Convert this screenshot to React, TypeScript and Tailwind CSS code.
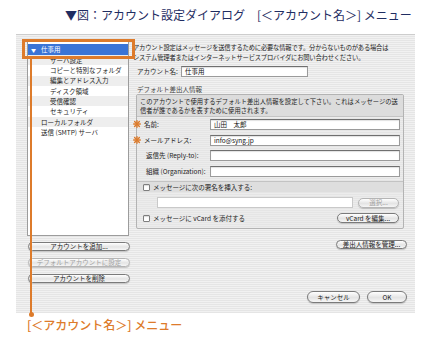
import * as React from 'react';

// Pinstripe aqua window background
const stripes =
  'bg-[repeating-linear-gradient(180deg,#f1f1f1_0px,#f1f1f1_1px,#e5e5e5_1px,#e5e5e5_2px)]';

function AquaButton({
  label,
  className = '',
  disabled = false,
}: {
  label: string;
  className?: string;
  disabled?: boolean;
}) {
  const tone = disabled
    ? 'border-[#b5b5b5] text-[#a0a0a0]'
    : 'border-[#7a7a7a] text-[#1a1a1a]';
  return (
    <div
      className={`flex items-center justify-center rounded-full border bg-[linear-gradient(#ffffff,#e4e4e4_55%,#f6f6f6)] shadow-[0_1px_1px_rgba(0,0,0,0.18)] text-[6.5px] leading-none whitespace-nowrap ${tone} ${className}`}
    >
      {label}
    </div>
  );
}

function Checkbox() {
  return <div className="w-[7px] h-[7px] shrink-0 border border-[#7e7e7e] bg-white rounded-[1px] shadow-[inset_0_1px_1px_rgba(0,0,0,0.15)]" />;
}

function Field({ value = '', className = '' }: { value?: string; className?: string }) {
  return (
    <div
      className={`h-[11px] bg-white border border-[#9b9b9b] border-t-[#6f6f6f] shadow-[inset_0_1px_1px_rgba(0,0,0,0.12)] pl-[3px] text-[6.5px] leading-[9px] text-[#111] ${className}`}
    >
      {value}
    </div>
  );
}

function Star() {
  return (
    <svg width="8" height="8" viewBox="0 0 8 8" className="absolute left-[-4px] top-[1px]">
      <g stroke="#dd7b2b" strokeWidth="1.4" strokeLinecap="round">
        <line x1="4" y1="0.7" x2="4" y2="7.3" />
        <line x1="0.7" y1="4" x2="7.3" y2="4" />
        <line x1="1.6" y1="1.6" x2="6.4" y2="6.4" />
        <line x1="6.4" y1="1.6" x2="1.6" y2="6.4" />
      </g>
    </svg>
  );
}

const treeRows = [
  { label: 'サーバ設定', indent: 'pl-[22px]' },
  { label: 'コピーと特別なフォルダ', indent: 'pl-[22px]' },
  { label: '編集とアドレス入力', indent: 'pl-[22px]' },
  { label: 'ディスク領域', indent: 'pl-[22px]' },
  { label: '受信確認', indent: 'pl-[22px]' },
  { label: 'セキュリティ', indent: 'pl-[22px]' },
  { label: 'ローカルフォルダ', indent: 'pl-[13px]' },
  { label: '送信 (SMTP) サーバ', indent: 'pl-[13px]' },
];

const senderFields = [
  { label: '名前:', value: '山田　太郎', star: true, pad: 'pl-[7px]', mt: 'mt-[2px]' },
  { label: 'メールアドレス:', value: 'info@syng.jp', star: true, pad: 'pl-[7px]', mt: 'mt-[5px]' },
  { label: '返信先 (Reply-to):', value: '', star: false, pad: 'pl-[9px]', mt: 'mt-[4px]' },
  { label: '組織 (Organization):', value: '', star: false, pad: 'pl-[9px]', mt: 'mt-[5px]' },
];

export default function App() {
  return (
    <div className="relative w-[430px] h-[344px] overflow-hidden bg-white font-['Noto_Sans_CJK_JP','Noto_Sans_CJK_SC',sans-serif]">
      {/* heading */}
      <div className="h-[34px] pl-[65px] pt-[8px] text-[12px] leading-[14px] text-[#1f2d62] whitespace-nowrap">
        ▼図：アカウント設定ダイアログ　[＜アカウント名＞] メニュー
      </div>

      {/* dialog */}
      <div className={`ml-[16px] w-[399px] h-[279px] flex border-t border-[#cdcdcd] ${stripes}`}>
        {/* left pane */}
        <div className="w-[115px] shrink-0 pl-[11px] pt-[6px] flex flex-col">
          <div className="w-[102px] h-[195px] bg-white border border-[#9c9c9c] pt-[2px] text-[6.5px] text-[#1c1c1c]">
            <div className="h-[11px] bg-[#3a74d6] text-white flex items-center pl-[3px] gap-[5px] leading-none">
              <span className="text-[5px]">▼</span>
              <span>仕事用</span>
            </div>
            {treeRows.map((row, i) => (
              <div
                key={row.label}
                className={`h-[10.3px] flex items-center leading-none ${row.indent} ${i % 2 === 0 ? 'bg-[#eeeeee]' : 'bg-white'}`}
              >
                {row.label}
              </div>
            ))}
          </div>
          <div className="mt-[6px] flex flex-col gap-[7px] pl-[1px]">
            <AquaButton label="アカウントを追加..." className="w-[102px] h-[9px]" />
            <AquaButton label="デフォルトアカウントに設定" className="w-[102px] h-[9px]" disabled />
            <AquaButton label="アカウントを削除" className="w-[102px] h-[9px]" />
          </div>
        </div>

        {/* right pane */}
        <div className="flex-1 flex flex-col pr-[8px] text-[6.5px] text-[#1c1c1c]">
          <div className="pl-[2px] pt-[8px] leading-[10px] text-[6.3px] tracking-[-0.2px] whitespace-nowrap">
            <div>アカウント設定はメッセージを送信するために必要な情報です。分からないものがある場合は</div>
            <div>システム管理者またはインターネットサービスプロバイダにお問い合わせください。</div>
          </div>

          <div className="mt-[3px] pl-[6px] flex items-center h-[11px]">
            <div className="w-[44px] leading-none">アカウント名:</div>
            <Field value="仕事用" className="w-[127px]" />
          </div>

          <div className="mt-[7px] pl-[6px] h-[10px] leading-[10px] text-[#444]">デフォルト差出人情報</div>

          {/* sender group */}
          <div className="ml-[5px] w-[268px] h-[135px] border border-[#b3b3b3] rounded-[2px] flex flex-col bg-[#e7e7e7]/40">
            <div className="h-[22px] bg-[#dcdcdc] border-b border-[#c4c4c4] px-[3px] pt-[2px] leading-[9px] text-[6.3px] whitespace-nowrap overflow-hidden">
              <div>このアカウントで使用するデフォルト差出人情報を設定して下さい。これはメッセージの送</div>
              <div>信者が誰であるかを表すために使用されます。</div>
            </div>

            {senderFields.map((f) => (
              <div key={f.label} className={`relative h-[11px] flex items-center ${f.pad} ${f.mt}`}>
                {f.star && <Star />}
                <div className={`leading-none ${f.pad === 'pl-[7px]' ? 'w-[66px]' : 'w-[64px]'}`}>{f.label}</div>
                <Field value={f.value} className="w-[190px]" />
              </div>
            ))}

            {/* signature block */}
            <div className="mt-[4px] flex-1 border-t border-[#c3c3c3] flex flex-col">
              <div className="h-[10px] bg-[#dedede] flex items-center pl-[6px] gap-[3px] leading-none">
                <Checkbox />
                <span>メッセージに次の署名を挿入する:</span>
              </div>
              <div className="mt-[5px] flex items-center pl-[20px]">
                <div className="w-[196px] h-[11px] bg-white border border-[#c9c9c9]" />
                <AquaButton label="選択..." className="ml-[5px] w-[41px] h-[10px]" disabled />
              </div>
              <div className="mt-[5px] flex items-center pl-[6px] h-[10px]">
                <Checkbox />
                <span className="ml-[3px] leading-none">メッセージに vCard を添付する</span>
                <AquaButton label="vCard を編集..." className="ml-auto mr-[4px] w-[62px] h-[10px]" />
              </div>
            </div>
          </div>

          <div className="mt-[11px] flex justify-end">
            <AquaButton label="差出人情報を管理..." className="w-[71px] h-[9px]" />
          </div>

          <div className="mt-auto mb-[10px] flex justify-end gap-[7px]">
            <AquaButton label="キャンセル" className="w-[53px] h-[12px]" />
            <AquaButton label="OK" className="w-[40px] h-[12px]" />
          </div>
        </div>
      </div>

      {/* caption */}
      <div className="pl-[27px] pt-[4px] text-[12px] leading-[16px] font-medium text-[#dd7b2b] whitespace-nowrap">
        [＜アカウント名＞] メニュー
      </div>

      {/* annotation overlay */}
      <div className="absolute left-[22px] top-[39px] w-[113px] h-[20px] border-[3px] border-[#dd7b2b]" />
      <div className="absolute left-[30px] top-[59px] w-[2px] h-[255px] bg-[#dd7b2b]" />
      <div className="absolute left-[28.5px] top-[312px] w-[5px] h-[5px] rounded-full bg-[#dd7b2b]" />
    </div>
  );
}
